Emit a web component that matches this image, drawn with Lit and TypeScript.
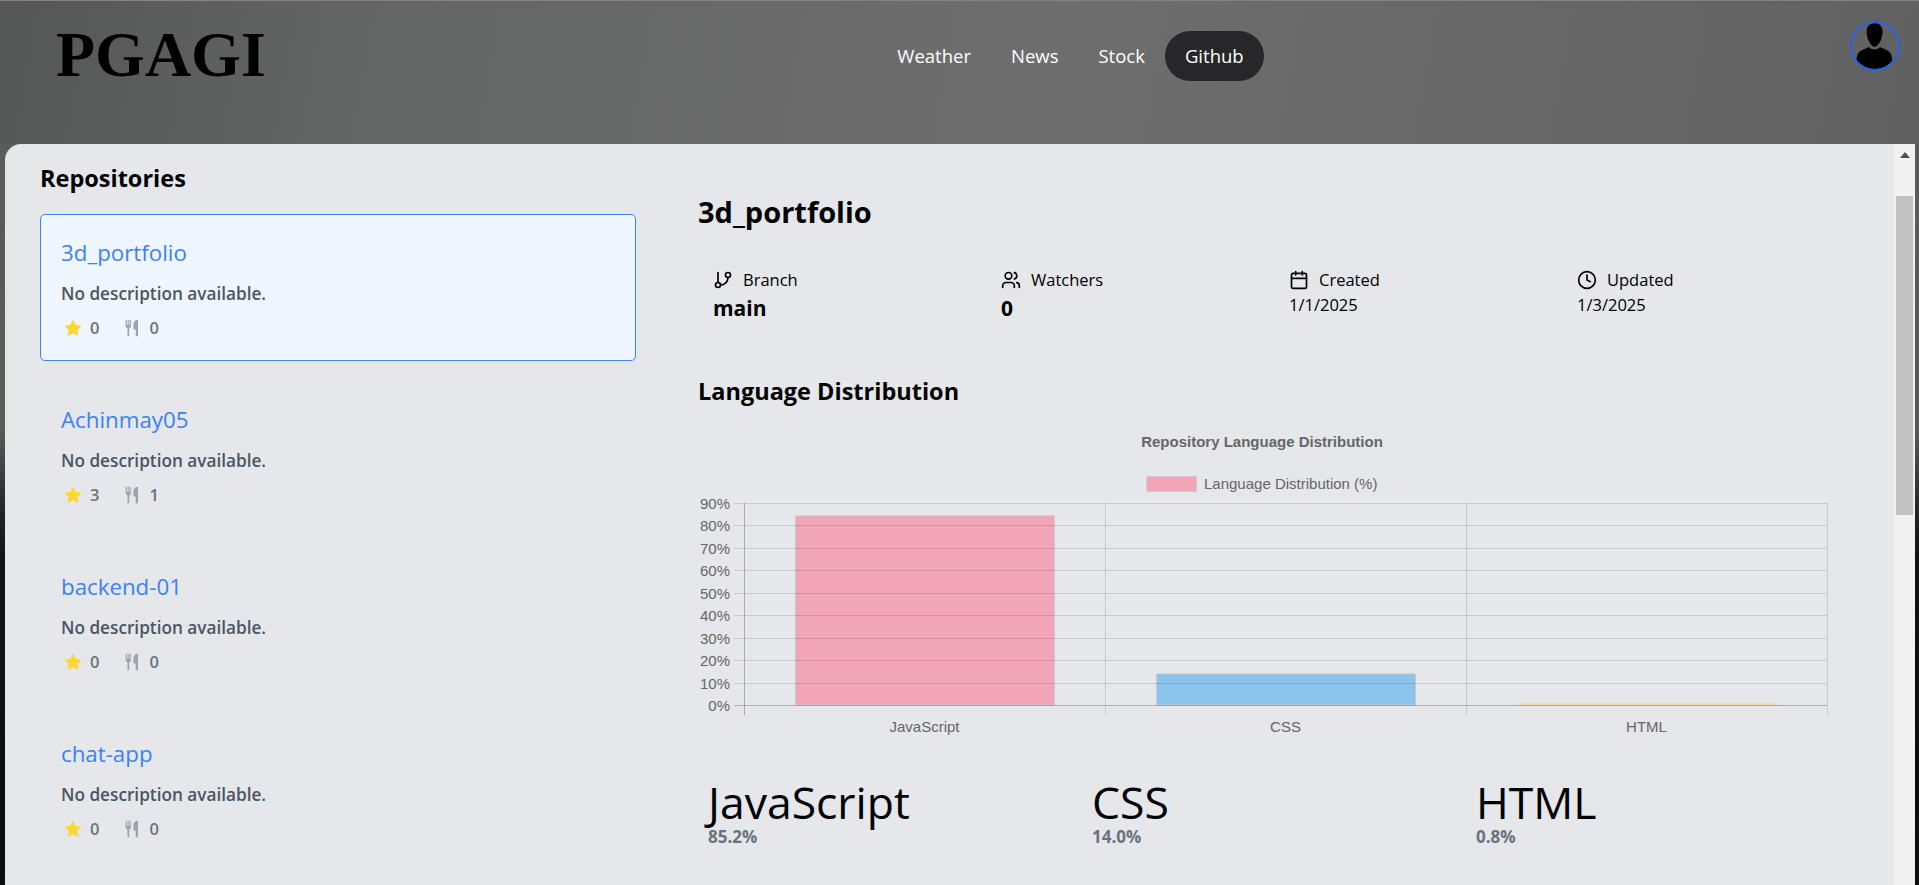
import { LitElement, html, css, svg } from "lit";
import { customElement, state } from "lit/decorators.js";

const repos = [
  { name: "3d_portfolio", stars: 0, forks: 0 },
  { name: "Achinmay05", stars: 3, forks: 1 },
  { name: "backend-01", stars: 0, forks: 0 },
  { name: "chat-app", stars: 0, forks: 0 },
];

const navLinks = ["Weather", "News", "Stock", "Github"];

const languages = [
  { name: "JavaScript", share: 85.2, fill: "rgba(255,99,132,.5)" },
  { name: "CSS", share: 14.0, fill: "rgba(54,162,235,.5)" },
  { name: "HTML", share: 0.8, fill: "rgba(255,206,86,.5)" },
];

const branchIcon = html`<svg viewBox="0 0 24 24"><path d="M6 3v12" /><circle cx="18" cy="6" r="3" /><circle cx="6" cy="18" r="3" /><path d="M18 9a9 9 0 0 1-9 9" /></svg>`;
const usersIcon = html`<svg viewBox="0 0 24 24"><path d="M16 21v-2a4 4 0 0 0-4-4H6a4 4 0 0 0-4 4v2" /><circle cx="9" cy="7" r="4" /><path d="M22 21v-2a4 4 0 0 0-3-3.87" /><path d="M16 3.13a4 4 0 0 1 0 7.75" /></svg>`;
const calendarIcon = html`<svg viewBox="0 0 24 24"><rect x="3" y="4" width="18" height="18" rx="2" /><path d="M16 2v4M8 2v4M3 10h18" /></svg>`;
const clockIcon = html`<svg viewBox="0 0 24 24"><circle cx="12" cy="12" r="10" /><path d="M12 6v6l4 2" /></svg>`;

// chart geometry, in px of the canvas
const X0 = 46;
const PLOT_W = 1083;
const Y_TOP = 6;
const Y_ZERO = 208;
const BAR_SCALE = 2.22; // px per percent

@customElement("lang-chart")
export class LangChart extends LitElement {
  static styles = css`
    :host {
      display: block;
      height: 310px;
    }
    svg {
      display: block;
      width: 1131px;
      height: 310px;
      font-family: "Liberation Sans", Arial, sans-serif;
      font-size: 15px;
      fill: #666;
    }
    .grid {
      stroke: rgba(0, 0, 0, 0.12);
      stroke-width: 1;
    }
    .axis {
      stroke: rgba(0, 0, 0, 0.25);
      stroke-width: 1;
    }
    .bar {
      stroke: rgba(201, 203, 207, 0.9);
      stroke-width: 1;
    }
    .title {
      font-weight: 700;
    }
  `;

  render() {
    const top = 68;
    const step = (Y_ZERO - Y_TOP) / 9;
    const catW = PLOT_W / 3;
    const ticks = Array.from({ length: 10 }, (_, i) => i);
    return html`<svg viewBox="0 0 1131 310">
      <text class="title" x="564" y="18" text-anchor="middle">Repository Language Distribution</text>
      <rect class="bar" x="448.500" y="47.500" width="50" height="15" fill="rgba(255,99,132,.5)" />
      <text x="506" y="60">Language Distribution (%)</text>
      <g transform="translate(0 ${top})">
        ${languages.map((l, i) => {
          const h = l.share * BAR_SCALE;
          const x = Math.round(X0 + i * catW + 51) + 0.5;
          return svg`<rect class=${l.share > 1 ? "bar" : ""} x=${x} y=${Y_ZERO - h} width="259" height=${h} fill=${l.fill} />
            <text x=${X0 + (i + 0.5) * catW} y=${Y_ZERO + 27} text-anchor="middle">${l.name}</text>`;
        })}
        ${ticks.map((i) => {
          const y = Math.round(Y_ZERO - i * step) + 0.5;
          return svg`<line class=${i === 0 ? "axis" : "grid"} x1=${X0 - 10} x2=${X0 + PLOT_W} y1=${y} y2=${y} />
            <text x=${X0 - 14} y=${y + 5} text-anchor="end">${i * 10}%</text>`;
        })}
        ${[0, 1, 2, 3].map((i) => {
          const x = Math.round(X0 + i * catW) + 0.5;
          return svg`<line class=${i === 0 ? "axis" : "grid"} x1=${x} x2=${x} y1=${Y_TOP} y2=${Y_ZERO + 10} />`;
        })}
      </g>
    </svg>`;
  }
}

@customElement("app-root")
export class AppRoot extends LitElement {
  static styles = css`
    :host {
      display: flex;
      flex-direction: column;
      height: 885px;
      overflow: hidden;
      box-sizing: border-box;
      border-top: 1px solid #8a7f88;
      background: linear-gradient(180deg, #5c5d5d 0, #5a5a5a 430px, #24282b 505px, #101214 560px, #0b0c0d 885px);
      font-family: "Open Sans", "Noto Sans", sans-serif;
      color: #000;
    }
    header {
      position: relative;
      flex: none;
      height: 143px;
      display: flex;
      justify-content: center;
      padding-top: 30px;
      box-sizing: border-box;
      background: linear-gradient(100deg, #555757 0, #646565 20%, #6e6e6e 55%, #616161 100%);
    }
    .logo {
      position: absolute;
      left: 56px;
      top: 18px;
      font: 700 64px/72px "Liberation Serif", "Times New Roman", serif;
    }
    nav {
      display: flex;
      align-items: center;
      height: 50px;
      margin-left: 222px;
    }
    nav a {
      display: block;
      padding: 0 20px;
      line-height: 50px;
      border-radius: 25px;
      font-size: 18.500px;
      font-weight: 500;
      color: #fff;
    }
    nav a.active {
      background: #27272a;
    }
    .avatar {
      position: absolute;
      left: 1850px;
      top: 20px;
      width: 50px;
      height: 50px;
      box-sizing: border-box;
      border: 2px solid #2563eb;
      border-radius: 50%;
      overflow: hidden;
    }
    .avatar svg {
      display: block;
      width: 100%;
      height: 100%;
    }
    .panel {
      flex: 1;
      min-height: 0;
      display: flex;
      margin: 0 4px 0 5px;
      background: #e5e7eb;
      border-radius: 16px 0 0 0;
      overflow: hidden;
    }
    .content {
      flex: 1;
      min-width: 0;
      display: grid;
      grid-template-columns: 596px 1152px;
      column-gap: 62px;
      padding-left: 35px;
      align-content: start;
    }
    h2 {
      margin: 0;
      font-size: 23.500px;
      font-weight: 700;
      line-height: 32px;
    }
    .repos h2 {
      margin: 18px 0 20px;
    }
    .card {
      box-sizing: border-box;
      height: 147px;
      margin-bottom: 20px;
      padding: 23px 20px 0;
      border: 1px solid transparent;
      border-radius: 5px;
    }
    .card.selected {
      background: #eff6ff;
      border-color: #3b82f6;
    }
    .card h3 {
      margin: 0;
      font-size: 22.300px;
      font-weight: 400;
      line-height: 30px;
      color: #3b82f6;
    }
    .card p {
      margin: 13px 0 0;
      font-size: 17.200px;
      font-weight: 600;
      line-height: 26px;
      color: #4b5563;
    }
    .meta {
      display: flex;
      align-items: center;
      gap: 24px;
      margin-top: 8px;
      padding-left: 3px;
      font-size: 16.500px;
      font-weight: 600;
      line-height: 26px;
      color: #6b7280;
    }
    .meta span {
      display: flex;
      align-items: center;
      gap: 8px;
    }
    .meta svg {
      display: block;
      width: 18px;
      height: 18px;
    }
    .detail h1 {
      margin: 0;
      padding-top: 48px;
      font-size: 29px;
      line-height: 40px;
      font-weight: 700;
    }
    .stats {
      display: grid;
      grid-template-columns: repeat(4, 288px);
      margin-top: 34px;
    }
    .stat {
      padding-left: 15px;
    }
    .stat .label {
      display: flex;
      align-items: center;
      gap: 10px;
      font-size: 16.500px;
      font-weight: 500;
      line-height: 27px;
    }
    .stat svg {
      display: block;
      width: 20px;
      height: 20px;
      fill: none;
      stroke: #000;
      stroke-width: 2;
      stroke-linecap: round;
      stroke-linejoin: round;
    }
    .stat .value {
      font-size: 21px;
      font-weight: 700;
      line-height: 30px;
    }
    .stat .value.date {
      font-size: 16.500px;
      font-weight: 500;
      line-height: 24px;
    }
    .detail h2 {
      margin-top: 52px;
    }
    lang-chart {
      margin-top: 22px;
    }
    .langs {
      display: grid;
      grid-template-columns: repeat(3, 384px);
      margin-top: 38px;
    }
    .lang {
      padding-left: 10px;
    }
    .lang .name {
      font-size: 44.500px;
      font-weight: 500;
      line-height: 50px;
    }
    .lang .pct {
      font-size: 17px;
      font-weight: 700;
      line-height: 20px;
      color: #6b7280;
    }
    .scrollbar {
      flex: none;
      width: 21px;
      background: #f1f1f1;
    }
    .scrollbar .up {
      width: 0;
      height: 0;
      margin: 8px auto 0;
      border-left: 5px solid transparent;
      border-right: 5px solid transparent;
      border-bottom: 6px solid #505050;
    }
    .scrollbar .thumb {
      height: 319px;
      margin: 38px 2px 0;
      background: #c1c1c1;
    }
  `;

  @state() selected = "3d_portfolio";

  render() {
    return html`
      <header>
        <div class="logo">PGAGI</div>
        <nav>
          ${navLinks.map((n) => html`<a class=${n === "Github" ? "active" : ""}>${n}</a>`)}
        </nav>
        <div class="avatar">
          <svg viewBox="0 0 46 46">
            <path d="M22.600 .3c4.800 0 8 3.200 8 8 0 3.500-.8 7-2.300 10-1.300 2.700-3.400 5.400-5.700 5.400s-4.400-2.700-5.700-5.400c-1.500-3-2.300-6.500-2.300-10 0-4.800 3.200-8 8-8z" />
            <path d="M4.600 36C5 30.500 7 28.500 10 27.200L17 24c2 3.300 9 3.300 11 0l7 3.200c3 1.300 4.500 3.300 5 8.800v2c-4 5-10 8-17.500 8S8.600 43 4.600 38z" />
          </svg>
        </div>
      </header>
      <div class="panel">
        <div class="content">
          <section class="repos">
            <h2>Repositories</h2>
            ${repos.map(
              (r) => html`<div class="card ${r.name === this.selected ? "selected" : ""}">
                <h3>${r.name}</h3>
                <p>No description available.</p>
                <div class="meta">
                  <span>
                    <svg viewBox="0 0 24 24" fill="#fdd835" stroke="#fdd835" stroke-width="2" stroke-linejoin="round">
                      <path d="M12 2.500l2.900 6.300 6.900.8-5.100 4.700 1.400 6.800-6.100-3.400-6.100 3.400 1.400-6.800-5.100-4.700 6.900-.8z" />
                    </svg>
                    ${r.stars}
                  </span>
                  <span>
                    <svg viewBox="0 0 24 24" fill="#9ca3af">
                      <path d="M3.500 1h1.500v7h1.200V1h1.500v7h1.200V1h1.600v8c0 2-1 3-2.200 3.500V23H6V12.500C4.700 12 3.500 11 3.500 9zM20 1v22h-3v-9h-3V7c0-3 2.500-6 6-6z" />
                    </svg>
                    ${r.forks}
                  </span>
                </div>
              </div>`
            )}
          </section>
          <section class="detail">
            <h1>3d_portfolio</h1>
            <div class="stats">
              <div class="stat">
                <div class="label">${branchIcon}Branch</div>
                <div class="value">main</div>
              </div>
              <div class="stat">
                <div class="label">${usersIcon}Watchers</div>
                <div class="value">0</div>
              </div>
              <div class="stat">
                <div class="label">${calendarIcon}Created</div>
                <div class="value date">1/1/2025</div>
              </div>
              <div class="stat">
                <div class="label">${clockIcon}Updated</div>
                <div class="value date">1/3/2025</div>
              </div>
            </div>
            <h2>Language Distribution</h2>
            <lang-chart></lang-chart>
            <div class="langs">
              ${languages.map(
                (l) => html`<div class="lang">
                  <div class="name">${l.name}</div>
                  <div class="pct">${l.share.toFixed(1)}%</div>
                </div>`
              )}
            </div>
          </section>
        </div>
        <div class="scrollbar">
          <div class="up"></div>
          <div class="thumb"></div>
        </div>
      </div>
    `;
  }
}
